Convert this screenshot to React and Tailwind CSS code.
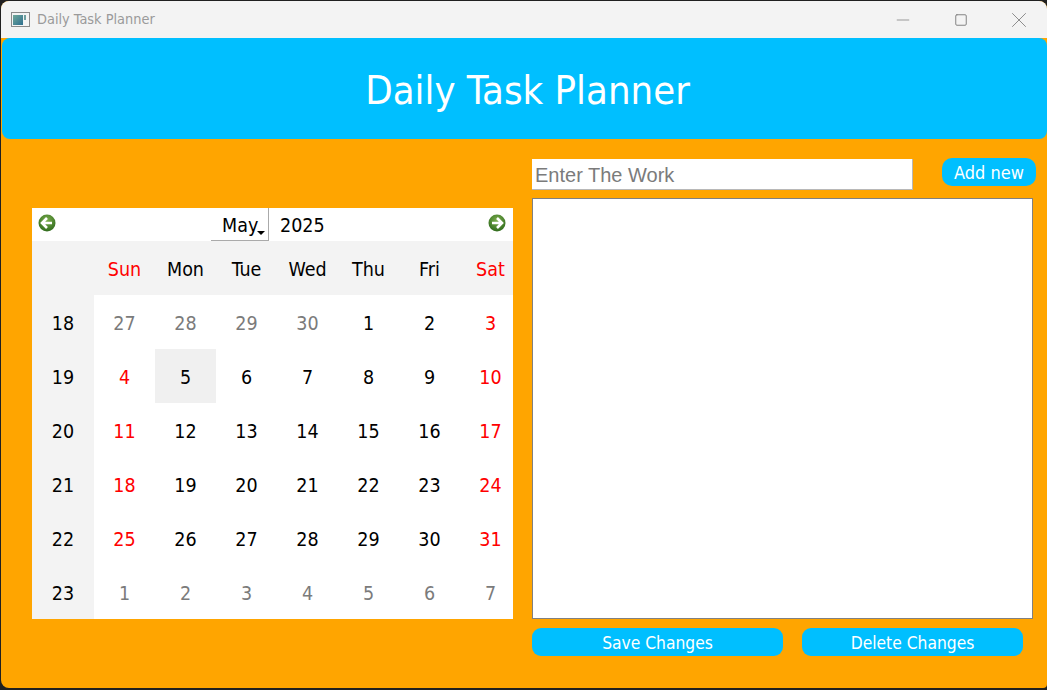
import { Minus, Square, X } from 'lucide-react';

const days = ['Sun', 'Mon', 'Tue', 'Wed', 'Thu', 'Fri', 'Sat'];

// week number + 7 days, "m" marks days outside of May
const weeks = [
  { no: 18, days: [[27, 'm'], [28, 'm'], [29, 'm'], [30, 'm'], [1], [2], [3]] },
  { no: 19, days: [[4], [5], [6], [7], [8], [9], [10]] },
  { no: 20, days: [[11], [12], [13], [14], [15], [16], [17]] },
  { no: 21, days: [[18], [19], [20], [21], [22], [23], [24]] },
  { no: 22, days: [[25], [26], [27], [28], [29], [30], [31]] },
  { no: 23, days: [[1, 'm'], [2, 'm'], [3, 'm'], [4, 'm'], [5, 'm'], [6, 'm'], [7, 'm']] },
];

function NavArrow({ flip }) {
  return (
    <svg width="18" height="18" viewBox="0 0 18 18" className={flip ? 'rotate-180' : ''}>
      <defs>
        <radialGradient id={flip ? 'navR' : 'navL'} cx="50%" cy={flip ? '65%' : '35%'} r="65%">
          <stop offset="0%" stopColor="#7fb04f" />
          <stop offset="100%" stopColor="#2f6b1c" />
        </radialGradient>
      </defs>
      <circle cx="9" cy="9" r="8.5" fill={`url(#${flip ? 'navR' : 'navL'})`} />
      <path d="M9 4 L4 9 L9 14 M4.5 9 H14" fill="none" stroke="#ffffff" strokeWidth="2.6" />
    </svg>
  );
}

function Calendar() {
  return (
    <div className="w-[481px] text-[19.5px] text-black">
      <div className="h-[33px] bg-white flex items-start justify-between pl-[6px] pr-[7px]">
        <div className="pt-[6px]"><NavArrow /></div>
        <div className="flex items-start ml-[155px]">
          <div className="relative w-[58px] h-[33px] border-r border-b border-[#aaaaaa] pl-[11px] flex items-center pt-[3px]">
            May
            <div className="absolute right-[3px] bottom-[5px] w-0 h-0 border-x-[4px] border-t-[4px] border-x-transparent border-t-black" />
          </div>
          <div className="pl-[11px] h-[33px] flex items-center pt-[3px]">2025</div>
        </div>
        <div className="flex-1" />
        <div className="pt-[6px]"><NavArrow flip /></div>
      </div>

      <div className="grid grid-cols-[62px_repeat(7,61px)] w-[481px] h-[54px] bg-[#f3f3f3] text-center">
        <div />
        {days.map((d, i) => (
          <div key={d} className={`flex items-center justify-center pt-[4px] ${i === 0 || i === 6 ? 'text-[#ff0000]' : ''}`}>{d}</div>
        ))}
      </div>

      {weeks.map(week => (
        <div key={week.no} className="grid grid-cols-[62px_repeat(7,61px)] h-[54px] bg-white text-center">
          <div className="bg-[#f3f3f3] flex items-center justify-center pt-[4px]">{week.no}</div>
          {week.days.map(([n, muted], i) => (
            <div
              key={i}
              className={`flex items-center justify-center pt-[4px] ${muted ? 'text-[#7b7b7b]' : i === 0 || i === 6 ? 'text-[#ff0000]' : ''} ${week.no === 19 && n === 5 ? 'bg-[#f0f0f0]' : ''}`}
            >
              {n}
            </div>
          ))}
        </div>
      ))}
    </div>
  );
}

export default function App() {
  return (
    <div className="w-[1047px] h-[690px] bg-[#202020] overflow-hidden pt-px pb-[2px] pl-px" style={{ fontFamily: '"DejaVu Sans Condensed", "Noto Sans", Tahoma, sans-serif' }}>
      <div className="h-full bg-[#ffa500] rounded-t-[8px] rounded-bl-[8px] rounded-br-[4px] overflow-hidden">
        {/* title bar */}
        <div className="h-[37px] bg-[#f3f3f3] flex items-center pl-[10px] text-[14.4px] text-[#9a9a9a]">
          <svg width="20" height="16" viewBox="0 0 20 16" className="mr-[6px]">
            <defs>
              <linearGradient id="appIcon" x1="0" y1="0" x2="1" y2="1">
                <stop offset="0%" stopColor="#6fa89a" />
                <stop offset="100%" stopColor="#2f6f8f" />
              </linearGradient>
            </defs>
            <rect x="0.5" y="0.5" width="18" height="14" fill="#f4f4f4" stroke="#8a8a8a" />
            <rect x="2" y="3" width="10" height="10" fill="url(#appIcon)" />
            <rect x="13" y="3" width="2" height="5" fill="#6f9f9f" />
          </svg>
          <span className="flex-1">Daily Task Planner</span>
          <div className="flex items-center -mr-px text-[#7c7c7c]">
            <div className="w-[58px] flex justify-center"><Minus size={20} strokeWidth={0.9} /></div>
            <div className="w-[58px] flex justify-center"><Square size={14} strokeWidth={1.6} /></div>
            <div className="w-[58px] flex justify-center"><X size={26} strokeWidth={0.8} /></div>
          </div>
        </div>

        {/* header */}
        <div className="h-[101px] ml-px bg-[#00bfff] rounded-[8px] flex items-center justify-center pl-[6px] pt-[5px] text-white text-[39.7px]">
          Daily Task Planner
        </div>

        <div className="flex pl-[31px] pt-[19px]">
          <div className="pt-[50px]">
            <Calendar />
          </div>

          <div className="ml-[19px] w-[504px] flex flex-col">
            <div className="flex items-start">
              <div className="w-[381px] h-[31px] mt-px bg-white border-r border-b border-[#b8b8b8] pl-[3px] pt-px leading-[30px] text-[20px] text-[#7b7b7b]" style={{ fontFamily: '"Liberation Sans", Arial, sans-serif' }}>
                Enter The Work
              </div>
              <button className="ml-[29px] w-[94px] h-[28px] pt-[1px] bg-[#00bfff] rounded-[10px] text-white text-[18px]">Add new</button>
            </div>
            <div className="mt-[8px] w-[501px] h-[421px] bg-white border border-[#808080]" />
            <div className="mt-[9px] flex">
              <button className="w-[251px] h-[28px] pt-[3px] bg-[#00bfff] rounded-[9px] text-white text-[17.3px]">Save Changes</button>
              <button className="ml-[19px] w-[221px] h-[28px] pt-[3px] bg-[#00bfff] rounded-[9px] text-white text-[17.3px]">Delete Changes</button>
            </div>
          </div>
        </div>
      </div>
    </div>
  );
}
